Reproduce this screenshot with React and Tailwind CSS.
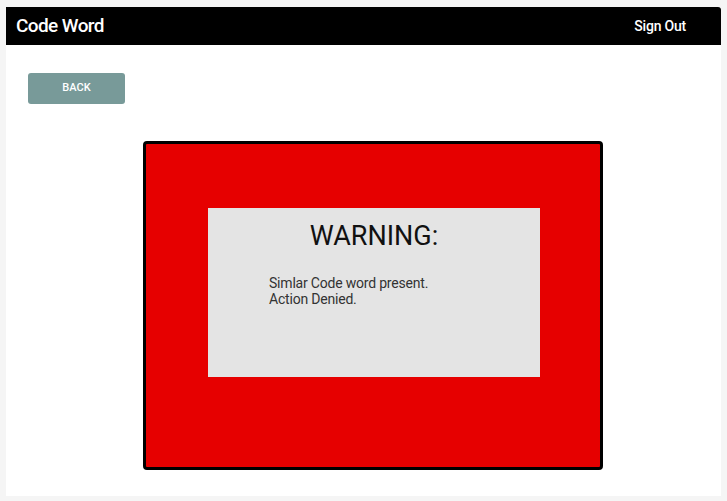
export default function App() {
    return (
        <div className="min-h-[501px] bg-[#f5f5f5] pt-[7px] px-[6px] pb-[5px]" style={{ fontFamily: "Roboto, 'Liberation Sans', sans-serif" }}>
            <div className="bg-white h-[489px]">
                <div className="h-[38px] bg-black rounded-tr-[3px] flex items-center justify-between pl-[10px] pr-[35px]">
                    <span className="text-white text-[19px] tracking-[-0.6px] font-medium">Code Word</span>
                    <span className="text-white text-[14px] font-medium tracking-[-0.2px]">Sign Out</span>
                </div>

                <div className="pt-[28px] pl-[22px]">
                    <button className="w-[97px] h-[31px] rounded-[3px] bg-[#789a99] text-white text-[11px] font-medium">
                        BACK
                    </button>
                </div>

                <div className="mt-[37px] ml-[137px] w-[460px] h-[329px] border-[3px] border-black rounded-[4px] bg-[#e60000] pt-[64px] pl-[62px]">
                    <div className="w-[332px] h-[169px] bg-[#e4e4e4] pt-[12px]">
                        <h1 className="text-center text-[27px] leading-[32px] text-[#111]">WARNING:</h1>
                        <div className="mt-[23px] pl-[61px] text-[14px] leading-[16px] tracking-[-0.2px] text-[#333]">
                            <p>Simlar Code word present.</p>
                            <p>Action Denied.</p>
                        </div>
                    </div>
                </div>
            </div>
        </div>
    );
}
